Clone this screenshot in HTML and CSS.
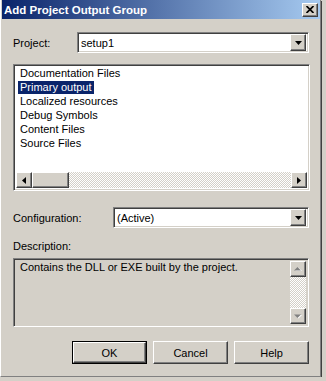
FILE: index.html
```html
<!DOCTYPE html>
<html><head><meta charset="UTF-8">
	<title>Add Project Output Group</title>
	<link rel="stylesheet" href="styles.css">
</head>
<body>
<div class="window">
	<div class="titlebar">
		<span class="title">Add Project Output Group</span>
		<span class="close raised">
			<svg width="8" height="7" viewBox="0 0 8 7"><path d="M0.5 0 L7.5 7 M7.5 0 L0.5 7" stroke="#000" stroke-width="1.7"/></svg>
		</span>
	</div>
	<div class="content">
		<div class="row">
			<span class="lbl project-lbl">Project:</span>
			<div class="combo project-combo sunken">
				<span class="combo-text">setup1</span>
				<span class="arrow-btn raised"><svg width="7" height="4" viewBox="0 0 7 4"><path d="M0 0 H7 L3.5 4 Z" fill="#000"/></svg></span>
			</div>
		</div>

		<div class="listbox sunken">
			<div class="items">
				<div class="item"><span>Documentation Files</span></div>
				<div class="item selected"><span>Primary output</span></div>
				<div class="item"><span>Localized resources</span></div>
				<div class="item"><span>Debug Symbols</span></div>
				<div class="item"><span>Content Files</span></div>
				<div class="item"><span>Source Files</span></div>
			</div>
			<div class="hscroll">
				<span class="sb-btn raised"><svg width="4" height="7" viewBox="0 0 4 7"><path d="M4 0 V7 L0 3.5 Z" fill="#000"/></svg></span>
				<span class="thumb raised"></span>
				<span class="track"></span>
				<span class="sb-btn raised"><svg width="4" height="7" viewBox="0 0 4 7"><path d="M0 0 V7 L4 3.5 Z" fill="#000"/></svg></span>
			</div>
		</div>

		<div class="row config-row">
			<span class="lbl config-lbl">Configuration:</span>
			<div class="combo config-combo sunken">
				<span class="combo-text">(Active)</span>
				<span class="arrow-btn raised"><svg width="7" height="4" viewBox="0 0 7 4"><path d="M0 0 H7 L3.5 4 Z" fill="#000"/></svg></span>
			</div>
		</div>

		<div class="lbl desc-lbl">Description:</div>
		<div class="descbox sunken">
			<div class="desc-text">Contains the DLL or EXE built by the project.</div>
			<div class="vscroll">
				<span class="sb-btn raised"><svg width="8" height="5" viewBox="0 0 8 5"><path d="M1 4 H8 L4.5 0.5 Z" fill="#fff"/><path d="M0 3.5 H7 L3.5 0 Z" fill="#808080"/></svg></span>
				<span class="track"></span>
				<span class="sb-btn raised"><svg width="8" height="5" viewBox="0 0 8 5"><path d="M1 1 H8 L4.5 4.5 Z" fill="#fff"/><path d="M0 0.5 H7 L3.5 4 Z" fill="#808080"/></svg></span>
			</div>
		</div>

		<div class="buttons">
			<span class="btn default"><span class="btn-face raised">OK</span></span>
			<span class="btn raised">Cancel</span>
			<span class="btn raised">Help</span>
		</div>
	</div>
</div>
</body></html>
```

FILE: styles.css
```css
body{
	margin: 0;
	background: #d4d0c8;
	font-family: "Liberation Sans", Arial, sans-serif;
	font-size: 11px;
	color: #000;
}
.window{
	width: 321px;
	height: 377px;
	border-left: 1px solid #fff;
	border-right: 1px solid #808080;
	border-bottom: 1px solid #808080;
	box-shadow: 1px 1px 0 #404040;
	background: #d4d0c8;
	padding-left: 1px;
	box-sizing: border-box;
}
.titlebar{
	height: 19px;
	display: flex;
	align-items: center;
	justify-content: space-between;
	background: linear-gradient(to right, #0a246a, #a6caf0);
	padding: 0 2px 0 2px;
}
.title{
	color: #fff;
	font-weight: bold;
	font-size: 11.5px;
}
.raised{
	background: #d4d0c8;
	border: 1px solid;
	border-color: #fff #404040 #404040 #fff;
	box-shadow: inset -1px -1px 0 #808080, inset 1px 1px 0 #d4d0c8;
	box-sizing: border-box;
}
.sunken{
	border: 1px solid;
	border-color: #808080 #fff #fff #808080;
	box-shadow: inset 1px 1px 0 #404040, inset -1px -1px 0 #d4d0c8;
	box-sizing: border-box;
}
.close{
	width: 16px;
	height: 14px;
	display: flex;
	align-items: center;
	justify-content: center;
}
.content{
	padding: 13px 0 0 11px;
}
.row{
	display: flex;
	align-items: center;
}
.lbl{
	display: block;
}
.project-lbl{
	width: 64px;
}
.config-lbl{
	width: 100px;
}
.combo{
	height: 21px;
	background: #fff;
	display: flex;
	align-items: center;
	padding: 2px;
}
.project-combo{
	width: 232px;
}
.config-combo{
	width: 196px;
}
.combo-text{
	flex: 1;
	padding-left: 1px;
}
.arrow-btn{
	width: 16px;
	height: 17px;
	display: flex;
	align-items: center;
	justify-content: center;
}
.listbox{
	margin-top: 11px;
	width: 297px;
	height: 127px;
	background: #fff;
	padding: 2px;
	display: flex;
	flex-direction: column;
}
.items{
	flex: 1;
	padding: 0 2px;
}
.item{
	height: 14px;
	line-height: 12px;
}
.item span{
	display: inline-block;
	padding: 0 2px;
}
.selected span{
	background: #0a246a;
	color: #fff;
	line-height: 13px;
}
.hscroll{
	height: 16px;
	display: flex;
}
.sb-btn{
	width: 16px;
	height: 16px;
	display: flex;
	align-items: center;
	justify-content: center;
}
.thumb{
	width: 37px;
	height: 16px;
}
.track{
	flex: 1;
	background-image: conic-gradient(#fff 25%, #d4d0c8 0 50%, #fff 0 75%, #d4d0c8 0);
	background-size: 2px 2px;
}
.config-row{
	margin-top: 16px;
}
.desc-lbl{
	margin-top: 12px;
	line-height: 13px;
}
.descbox{
	margin-top: 5px;
	width: 296px;
	height: 69px;
	padding: 2px;
	display: flex;
}
.desc-text{
	flex: 1;
	padding: 0 4px;
	line-height: 13px;
}
.vscroll{
	width: 16px;
	display: flex;
	flex-direction: column;
}
.buttons{
	margin-top: 14px;
	width: 296px;
	display: flex;
	justify-content: flex-end;
	gap: 6px;
}
.btn{
	width: 75px;
	height: 23px;
	display: flex;
	align-items: center;
	justify-content: center;
}
.default{
	border: 1px solid #000;
	box-sizing: border-box;
}
.btn-face{
	width: 100%;
	height: 100%;
	display: flex;
	align-items: center;
	justify-content: center;
}
```
